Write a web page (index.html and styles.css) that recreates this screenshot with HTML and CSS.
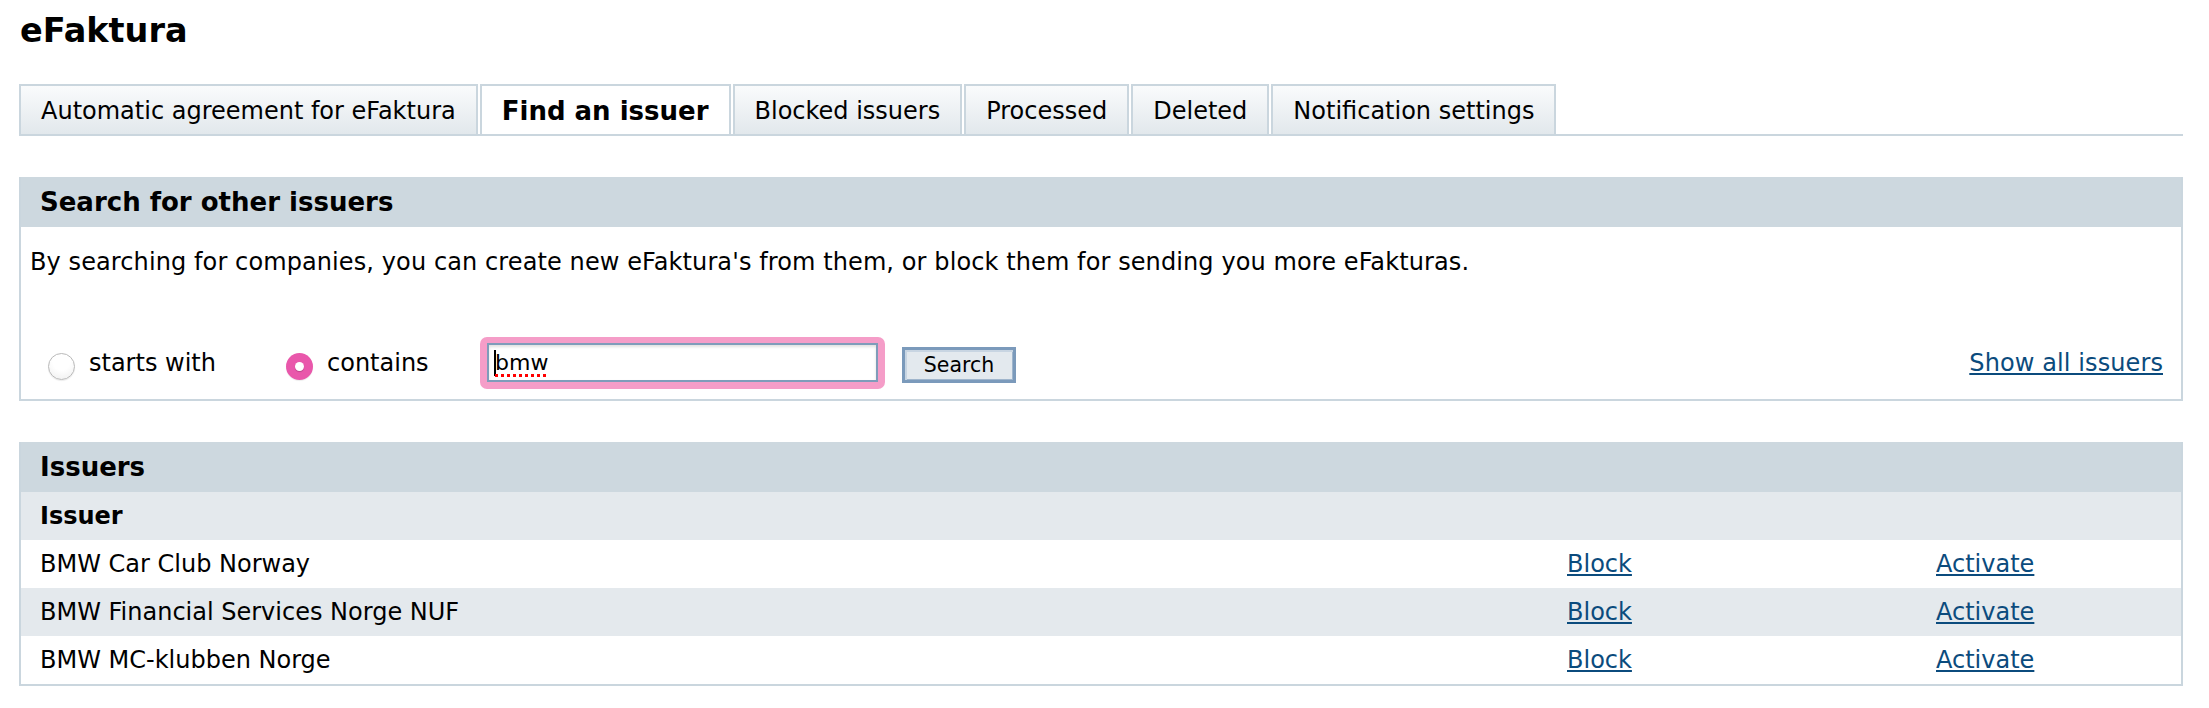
FILE: index.html
```html
<!DOCTYPE html>
<html lang="en">
<head>
<meta charset="utf-8">
<title>eFaktura</title>
<link rel="stylesheet" href="styles.css">
</head>
<body>
<div class="page">
  <h1 class="title">eFaktura</h1>
  <nav class="tabs">
    <a class="tab">Automatic agreement for eFaktura</a>
    <a class="tab active">Find an issuer</a>
    <a class="tab">Blocked issuers</a>
    <a class="tab">Processed</a>
    <a class="tab">Deleted</a>
    <a class="tab">Notification settings</a>
  </nav>

  <section class="panel search">
    <h2 class="panel-head">Search for other issuers</h2>
    <div class="search-body">
      <p class="desc">By searching for companies, you can create new eFaktura's from them, or block them for sending you more eFakturas.</p>
      <div class="controls">
        <label class="opt opt-starts"><span class="radio"></span>starts with</label>
        <label class="opt opt-contains"><span class="radio checked"></span>contains</label>
        <div class="field-ring">
          <div class="field"><span class="caret"></span><span class="typed">bmw</span></div>
        </div>
        <button class="btn" type="button">Search</button>
        <a class="link show-all">Show all issuers</a>
      </div>
    </div>
  </section>

  <section class="panel issuers">
    <h2 class="panel-head">Issuers</h2>
    <div class="row row-head">
      <div class="cell">Issuer</div>
      <div class="cell"></div>
      <div class="cell"></div>
    </div>
    <div class="row">
      <div class="cell">BMW Car Club Norway</div>
      <div class="cell"><a class="link">Block</a></div>
      <div class="cell"><a class="link">Activate</a></div>
    </div>
    <div class="row alt">
      <div class="cell">BMW Financial Services Norge NUF</div>
      <div class="cell"><a class="link">Block</a></div>
      <div class="cell"><a class="link">Activate</a></div>
    </div>
    <div class="row">
      <div class="cell">BMW MC-klubben Norge</div>
      <div class="cell"><a class="link">Block</a></div>
      <div class="cell"><a class="link">Activate</a></div>
    </div>
  </section>
</div>
</body>
</html>
```

FILE: styles.css
```css
* { box-sizing: border-box; }

html, body {
  margin: 0;
  padding: 0;
  background: #ffffff;
  color: #000000;
  font-family: "DejaVu Sans", Verdana, sans-serif;
  font-size: 24px;
}

.page {
  padding: 0 26px 0 19px;
}

.title {
  margin: 11px 0 0 1px;
  font-size: 33.5px;
  line-height: 40px;
  font-weight: bold;
}

/* Tabs */
.tabs {
  display: flex;
  gap: 2px;
  margin-top: 33px;
  border-bottom: 2px solid #cad6de;
}

.tab {
  display: flex;
  align-items: center;
  height: 50px;
  padding: 2px 20px 0;
  border: 2px solid #cad6de;
  border-bottom: 0;
  background: linear-gradient(#fafbfc, #e2e8ec);
  font-size: 24px;
  color: #000;
  white-space: nowrap;
}

.tab.active {
  background: #ffffff;
  font-weight: bold;
  font-size: 26px;
  padding: 2px 20px 0;
}

/* Panels */
.panel {
  margin-top: 41px;
  border: 2px solid #cad6de;
  border-top: 0;
}

.panel-head {
  margin: 0;
  height: 50px;
  display: flex;
  align-items: center;
  padding-left: 19px;
  background: #cdd8df;
  font-size: 26px;
  font-weight: bold;
}

.search-body {
  padding: 20px 18px 10px 9px;
}

.desc {
  margin: 0;
  font-size: 24px;
  line-height: 30px;
  letter-spacing: 0.1px;
}

.controls {
  display: flex;
  align-items: center;
  height: 52px;
  margin-top: 60px;
}

.opt {
  display: flex;
  align-items: center;
  font-size: 24px;
  white-space: nowrap;
}

.opt-starts {
  flex: 0 0 256px;
  padding-left: 18px;
}

.opt-contains {
  flex: 0 0 194px;
}

.radio {
  flex: 0 0 27px;
  width: 27px;
  height: 27px;
  margin: 6px 14px 0 0;
  border-radius: 50%;
  border: 1px solid #b9b9b9;
  background: radial-gradient(circle at 50% 30%, #ffffff 40%, #ededed 100%);
  box-shadow: 0 1px 1px rgba(0, 0, 0, 0.08);
  position: relative;
}

.radio.checked {
  border: none;
  background: #e957ab;
}

.radio.checked::after {
  content: "";
  position: absolute;
  left: 50%;
  top: 50%;
  width: 9px;
  height: 9px;
  margin: -4px 0 0 -4.5px;
  border-radius: 50%;
  background: #ffffff;
  box-shadow: 0 1px 1px rgba(0, 0, 0, 0.2);
}

.field-ring {
  flex: 0 0 405px;
  height: 52px;
  padding: 6px 7px 7px;
  border-radius: 7px;
  background: #f59dc8;
}

.field {
  height: 39px;
  border: 2px solid #7f9cba;
  background: #ffffff;
  box-shadow: inset 0 2px 3px rgba(0, 0, 0, 0.12);
  display: flex;
  align-items: center;
  padding-left: 5px;
  font-size: 22px;
}

.caret {
  width: 2px;
  height: 26px;
  background: #000;
  margin-right: -1px;
}

.typed {
  text-decoration: underline dotted #ff0000;
  text-decoration-thickness: 3px;
  text-underline-offset: 4px;
}

.btn {
  margin-left: 17px;
  width: 114px;
  height: 36px;
  margin-top: 4px;
  border: 3px solid #7b9abb;
  box-shadow: inset 2px 2px 0 #c8d5e2, inset -1px -1px 0 #9fb5cc;
  background: #e3e9ee;
  font-family: "DejaVu Sans", Verdana, sans-serif;
  font-size: 20.5px;
  color: #000;
  padding: 0;
}

.link {
  color: #0b4b7d;
  text-decoration: underline;
  cursor: pointer;
}

.show-all {
  margin-left: auto;
  font-size: 24px;
  margin-top: 0;
  letter-spacing: 0.1px;
}

/* Issuers table */
.row {
  display: grid;
  grid-template-columns: 1fr 369px 264px;
  height: 48px;
  align-items: center;
  background: #ffffff;
}

.row.alt,
.row-head {
  background: #e4e9ed;
}

.row-head {
  font-weight: bold;
}

.cell {
  padding-left: 19px;
  font-size: 24px;
  white-space: nowrap;
}
```
